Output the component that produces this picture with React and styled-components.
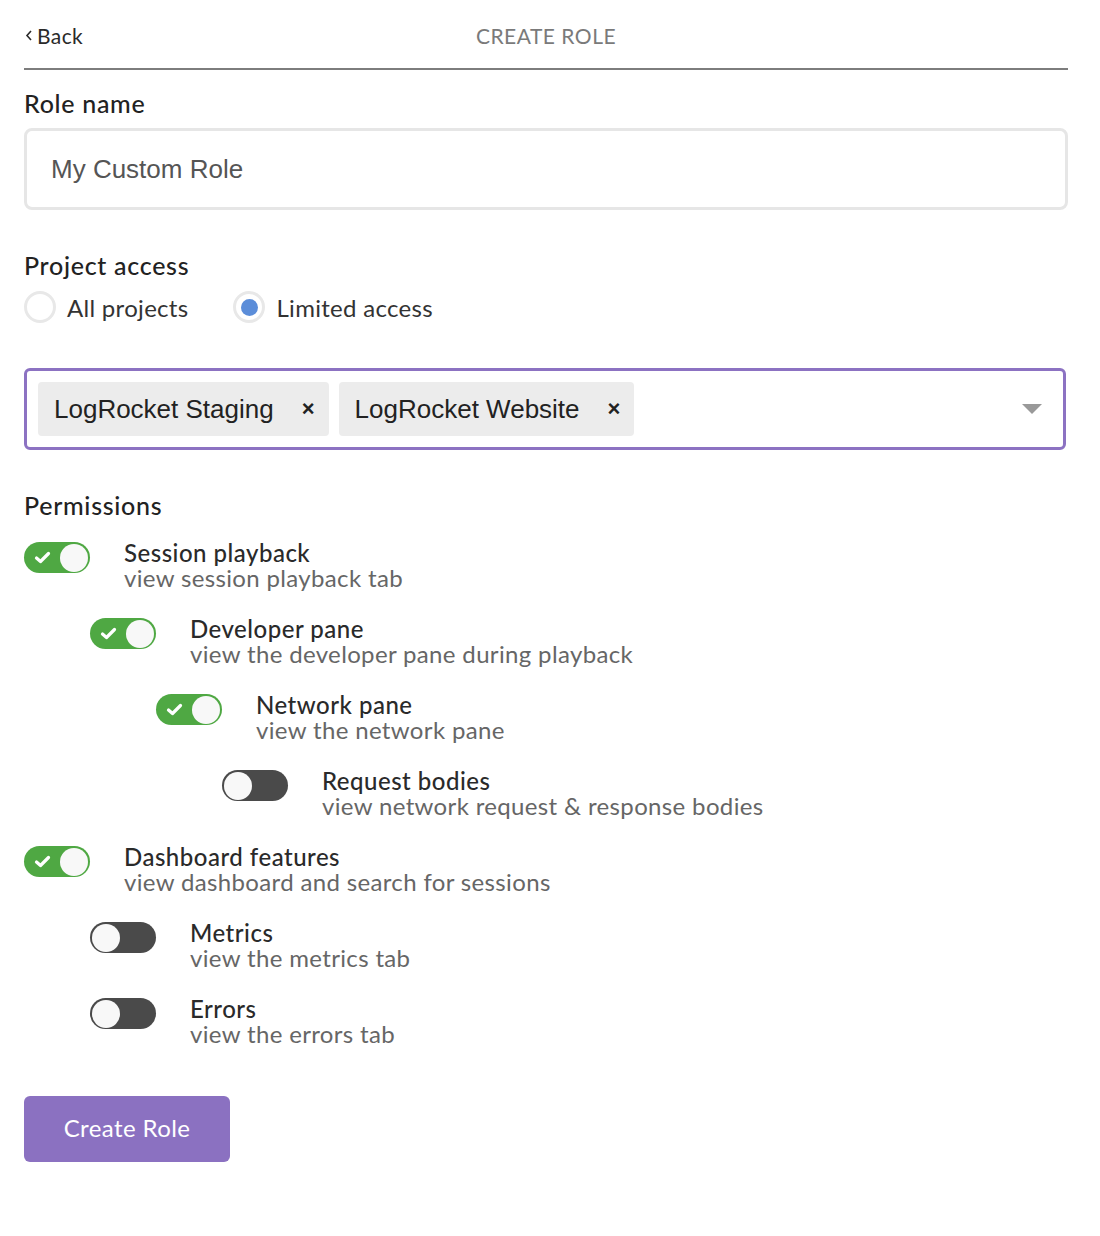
import React from "react";
import styled, { createGlobalStyle } from "styled-components";

const GlobalStyle = createGlobalStyle`
  body {
    margin: 0;
    background: #ffffff;
    font-family: Lato, "Noto Sans", sans-serif;
    color: #2a2a2a;
  }
  * {
    box-sizing: border-box;
  }
`;

const permissions = [
  { title: "Session playback", desc: "view session playback tab", level: 0, on: true },
  { title: "Developer pane", desc: "view the developer pane during playback", level: 1, on: true },
  { title: "Network pane", desc: "view the network pane", level: 2, on: true },
  { title: "Request bodies", desc: "view network request & response bodies", level: 3, on: false },
  { title: "Dashboard features", desc: "view dashboard and search for sessions", level: 0, on: true },
  { title: "Metrics", desc: "view the metrics tab", level: 1, on: false },
  { title: "Errors", desc: "view the errors tab", level: 1, on: false },
];

const projects = ["LogRocket Staging", "LogRocket Website"];

const App = () => {
  return (
    <Page>
      <GlobalStyle />
      <Header>
        <BackLink>
          <svg width="10" height="14" viewBox="0 0 10 14">
            <polyline
              points="7,3 3,7.5 7,12"
              fill="none"
              stroke="#2a2a2a"
              strokeWidth="1.6"
            />
          </svg>
          Back
        </BackLink>
        <HeaderTitle>CREATE ROLE</HeaderTitle>
        <span />
      </Header>

      <Label top={18}>Role name</Label>
      <TextInput>My Custom Role</TextInput>

      <Label top={40}>Project access</Label>
      <RadioGroup>
        <RadioOption>
          <Radio />
          All projects
        </RadioOption>
        <RadioOption>
          <Radio checked />
          Limited access
        </RadioOption>
      </RadioGroup>

      <MultiSelect>
        {projects.map((name) => (
          <Tag key={name}>
            <TagText>{name}</TagText>
            <TagRemove>×</TagRemove>
          </Tag>
        ))}
        <Caret />
      </MultiSelect>

      <Label top={40}>Permissions</Label>
      <PermissionList>
        {permissions.map((p) => (
          <PermissionRow key={p.title} level={p.level}>
            <Toggle on={p.on}>
              {p.on && (
                <CheckIcon width="17" height="13" viewBox="0 0 17 13">
                  <polyline
                    points="2.5,7 6.5,10.5 14.5,2.5"
                    fill="none"
                    stroke="#ffffff"
                    strokeWidth="3.2"
                    strokeLinecap="round"
                    strokeLinejoin="round"
                  />
                </CheckIcon>
              )}
              <Knob on={p.on} />
            </Toggle>
            <PermissionText>
              <PermissionTitle>{p.title}</PermissionTitle>
              <PermissionDesc>{p.desc}</PermissionDesc>
            </PermissionText>
          </PermissionRow>
        ))}
      </PermissionList>

      <SubmitButton>Create Role</SubmitButton>
    </Page>
  );
};

const Page = styled.div`
  padding: 0 32px 60px 24px;
  width: 1100px;
`;

const Header = styled.div`
  display: grid;
  grid-template-columns: 1fr auto 1fr;
  align-items: center;
  height: 70px;
  padding-top: 2px;
  border-bottom: 2px solid #7d7d7d;
`;

const BackLink = styled.a`
  display: flex;
  align-items: center;
  gap: 3px;
  font-size: 21px;
  letter-spacing: 0.4px;
  color: #2a2a2a;
  cursor: pointer;
`;

const HeaderTitle = styled.div`
  font-size: 21px;
  color: #7a7a7a;
  letter-spacing: 0.5px;
`;

const Label = styled.div`
  margin-top: ${(props) => props.top}px;
  font-size: 25px;
  line-height: 30px;
  letter-spacing: 0.7px;
  font-weight: 500;
  color: #222222;
`;

const TextInput = styled.div`
  margin-top: 10px;
  height: 82px;
  border: 3px solid #e6e6e6;
  border-radius: 8px;
  padding: 0 24px;
  display: flex;
  align-items: center;
  font-family: "Liberation Sans", Arial, sans-serif;
  font-size: 26px;
  color: #555555;
`;

const RadioGroup = styled.div`
  display: flex;
  gap: 45px;
  margin-top: 11px;
`;

const RadioOption = styled.label`
  display: flex;
  align-items: center;
  gap: 11px;
  font-size: 24px;
  letter-spacing: 0.3px;
  color: #333333;
`;

const Radio = styled.span`
  width: 32px;
  height: 32px;
  border-radius: 50%;
  border: 3px solid #e8e8e8;
  display: flex;
  align-items: center;
  justify-content: center;

  &::after {
    content: "";
    display: ${(props) => (props.checked ? "block" : "none")};
    width: 17px;
    height: 17px;
    border-radius: 50%;
    background: #5b8dd9;
  }
`;

const MultiSelect = styled.div`
  margin-top: 45px;
  height: 82px;
  border: 3px solid #8c72c2;
  border-radius: 6px;
  padding: 11px;
  display: flex;
  align-items: center;
  gap: 10px;
  margin-right: 2px;
`;

const Tag = styled.div`
  height: 54px;
  background: #ececec;
  border-radius: 4px;
  display: flex;
  align-items: center;
  padding: 0 14px 0 16px;
`;

const TagText = styled.span`
  font-family: "Liberation Sans", Arial, sans-serif;
  font-size: 26px;
  color: #222222;
`;

const TagRemove = styled.span`
  margin-left: 28px;
  font-family: "Liberation Sans", Arial, sans-serif;
  font-size: 22px;
  font-weight: 700;
  color: #222222;
`;

const Caret = styled.span`
  margin-left: auto;
  margin-right: 10px;
  width: 0;
  height: 0;
  border-left: 10px solid transparent;
  border-right: 10px solid transparent;
  border-top: 10px solid #999999;
`;

const PermissionList = styled.div`
  margin-top: 20px;
  display: flex;
  flex-direction: column;
  gap: 26px;
`;

const PermissionRow = styled.div`
  display: flex;
  align-items: flex-start;
  padding-left: ${(props) => props.level * 66}px;
`;

const Toggle = styled.span`
  position: relative;
  flex: none;
  width: 66px;
  height: 31px;
  margin-top: 2px;
  border-radius: 16px;
  background: ${(props) => (props.on ? "#4fa843" : "#4a4a4a")};
`;

const CheckIcon = styled.svg`
  position: absolute;
  left: 10px;
  top: 9px;
`;

const Knob = styled.span`
  position: absolute;
  top: 1.5px;
  left: ${(props) => (props.on ? "36px" : "2px")};
  width: 28px;
  height: 28px;
  border-radius: 50%;
  background: #f8f8f8;
`;

const PermissionText = styled.div`
  margin-left: 34px;
  display: flex;
  flex-direction: column;
`;

const PermissionTitle = styled.div`
  font-size: 24px;
  line-height: 25px;
  letter-spacing: 0.5px;
  font-weight: 500;
  color: #2a2a2a;
`;

const PermissionDesc = styled.div`
  font-size: 24px;
  line-height: 25px;
  letter-spacing: 0.35px;
  color: #666666;
`;

const SubmitButton = styled.button`
  margin-top: 50px;
  width: 206px;
  height: 66px;
  border: none;
  border-radius: 6px;
  background: #8b71c1;
  color: #ffffff;
  font-family: Lato, "Noto Sans", sans-serif;
  font-size: 24px;
  font-weight: 400;
  letter-spacing: 0.4px;
  padding-bottom: 4px;
  cursor: pointer;
`;

export default App;
